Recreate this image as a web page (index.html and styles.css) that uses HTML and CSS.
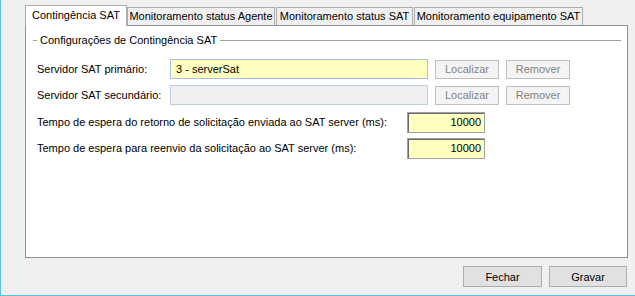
FILE: index.html
```html
<!DOCTYPE html>
<html>
<head>
	<title>Contingência SAT</title>
	<link rel="stylesheet" href="styles.css">
</head>
<body>
	<div class="window">
		<!-- Abas -->
		<div class="tabs">
			<div class="tab tab-active">Contingência SAT</div>
			<div class="tab tab-agente">Monitoramento status Agente</div>
			<div class="tab tab-sat">Monitoramento status SAT</div>
			<div class="tab tab-equip">Monitoramento equipamento SAT</div>
		</div>
		<div class="panel">
			<div class="group">
				<div class="group-title">
					<span class="line-short"></span>
					<span class="group-text">Configurações de Contingência SAT</span>
					<span class="line-long"></span>
				</div>
				<div class="rows">
					<div class="row">
						<label class="lbl">Servidor SAT primário:</label>
						<div class="field field-yellow">3 - serverSat</div>
						<button class="btn-off">Localizar</button>
						<button class="btn-off">Remover</button>
					</div>
					<div class="row">
						<label class="lbl">Servidor SAT secundário:</label>
						<div class="field field-disabled"></div>
						<button class="btn-off">Localizar</button>
						<button class="btn-off">Remover</button>
					</div>
					<div class="row row-num">
						<label class="lbl lbl-wide">Tempo de espera do retorno de solicitação enviada ao SAT server (ms):</label>
						<div class="num">10000</div>
					</div>
					<div class="row">
						<label class="lbl lbl-wide">Tempo de espera para reenvio da solicitação ao SAT server (ms):</label>
						<div class="num">10000</div>
					</div>
				</div>
			</div>
		</div>
		<div class="footer">
			<button class="btn btn-fechar">Fechar</button>
			<button class="btn btn-gravar">Gravar</button>
		</div>
	</div>
</body>
</html>
```

FILE: styles.css
```css
html, body {
	margin: 0;
	padding: 0;
}
body {
	background-color: #f0f0f0;
	font-family: "Liberation Sans", Arial, sans-serif;
	font-size: 11px;
	color: #000;
}
.window {
	width: 635px;
	height: 296px;
	border-left: 1px solid #5cbfe4;
	border-bottom: 1px solid #5cbfe4;
	padding: 5px 0 0 24px;
	box-sizing: border-box;
}

/* abas */
.tabs {
	display: flex;
	align-items: flex-end;
	height: 20px;
	position: relative;
	z-index: 1;
}
.tab {
	box-sizing: border-box;
	height: 18px;
	border: 1px solid #acacac;
	border-bottom: none;
	background-color: #f0f0f0;
	text-align: center;
	line-height: 17px;
	white-space: nowrap;
}
.tab-active {
	width: 102px;
	height: 21px;
	margin-bottom: -1px;
	background-color: #fff;
	line-height: 19px;
	border-color: #acacac;
}
.tab-agente {
	width: 148px;
}
.tab-sat {
	width: 137px;
	margin-left: 1px;
}
.tab-equip {
	width: 169px;
	margin-left: 1px;
}

.panel {
	box-sizing: border-box;
	width: 603px;
	height: 233px;
	border: 1px solid #8e8f8f;
	background-color: #fff;
	padding: 7px 6px 0 7px;
}

/* grupo */
.group-title {
	display: flex;
	align-items: center;
	height: 14px;
}
.line-short {
	width: 4px;
	border-top: 1px solid #a0a0a0;
}
.group-text {
	padding: 0 3px;
}
.line-long {
	flex: 1;
	border-top: 1px solid #a0a0a0;
}
.rows {
	display: flex;
	flex-direction: column;
	gap: 6px;
	margin-top: 12px;
	padding-left: 4px;
}
.row {
	display: flex;
	align-items: center;
	height: 20px;
}
.row-num {
	margin-top: 1px;
}
.lbl {
	width: 133px;
	white-space: nowrap;
}
.lbl-wide {
	width: 370px;
}
.field {
	box-sizing: border-box;
	width: 258px;
	height: 20px;
	border: 1px solid #a6c1e3;
	padding: 0 0 0 5px;
	line-height: 18px;
	margin-right: 7px;
}
.field-yellow {
	background-color: #ffffc0;
}
.field-disabled {
	background-color: #f0f0f0;
	border-color: #bccde6;
}
.btn-off {
	box-sizing: border-box;
	width: 64px;
	height: 19px;
	margin-right: 7px;
	padding: 0;
	border: 1px solid #bfbfbf;
	background-color: #f4f4f4;
	color: #838383;
	font-family: "Liberation Sans", Arial, sans-serif;
	font-size: 11px;
}
.num {
	box-sizing: border-box;
	width: 78px;
	height: 21px;
	border: 1px solid #a0a0a0;
	box-shadow: inset 1px 1px 0 #696969;
	background-color: #ffffc0;
	text-align: right;
	padding-right: 3px;
	line-height: 19px;
}

/* botoes do rodape */
.footer {
	display: flex;
	justify-content: flex-end;
	gap: 7px;
	margin-top: 8px;
	padding-right: 8px;
}
.btn {
	box-sizing: border-box;
	width: 79px;
	height: 21px;
	padding: 0;
	border: 1px solid #adadad;
	background-color: #e1e1e1;
	color: #000;
	font-family: "Liberation Sans", Arial, sans-serif;
	font-size: 11px;
}
.btn-gravar {
	width: 78px;
}
```
